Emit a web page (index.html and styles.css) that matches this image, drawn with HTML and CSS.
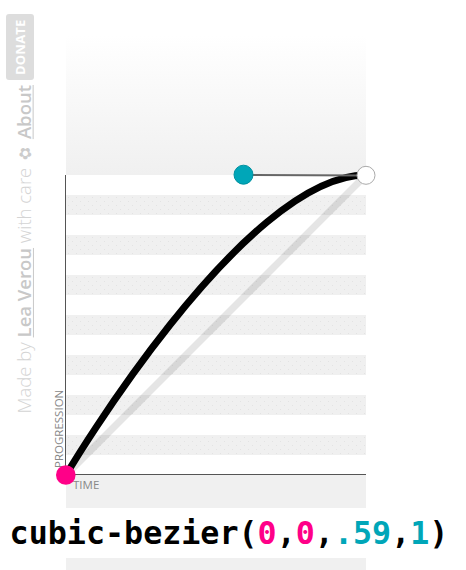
FILE: index.html
```html
<!DOCTYPE html>
<html lang="en">
<head>
<meta charset="utf-8">
<title>cubic-bezier</title>
<link rel="stylesheet" href="styles.css">
</head>
<body>
<div class="app">
  <aside class="side">
    <a class="donate" href="#">DONATE</a>
    <p class="credit">Made by <a class="strong" href="#">Lea Verou</a> with care <span class="flower">✿</span> <a class="strong" href="#">About</a></p>
  </aside>
  <svg class="plot" width="330" height="508" viewBox="46 0 330 508" xmlns="http://www.w3.org/2000/svg">
    <defs>
      <linearGradient id="fade" x1="0" y1="0" x2="0" y2="1">
        <stop offset="0" stop-color="#ffffff"/>
        <stop offset="1" stop-color="#f0f0f0"/>
      </linearGradient>
      <pattern id="dots" width="8" height="8" patternUnits="userSpaceOnUse" x="66" y="195">
        <rect x="2" y="2" width="1" height="1" fill="#e3e3e3"/>
        <rect x="6" y="6" width="1" height="1" fill="#e3e3e3"/>
      </pattern>
    </defs>
    <rect x="66" y="35" width="300" height="140" fill="url(#fade)"/>
    <g class="bands">
      <rect x="66" y="195" width="300" height="20"/>
      <rect x="66" y="235" width="300" height="20"/>
      <rect x="66" y="275" width="300" height="20"/>
      <rect x="66" y="315" width="300" height="20"/>
      <rect x="66" y="355" width="300" height="20"/>
      <rect x="66" y="395" width="300" height="20"/>
      <rect x="66" y="435" width="300" height="20"/>
    </g>
    <g fill="url(#dots)">
      <rect x="66" y="195" width="300" height="20"/>
      <rect x="66" y="235" width="300" height="20"/>
      <rect x="66" y="275" width="300" height="20"/>
      <rect x="66" y="315" width="300" height="20"/>
      <rect x="66" y="355" width="300" height="20"/>
      <rect x="66" y="395" width="300" height="20"/>
      <rect x="66" y="435" width="300" height="20"/>
    </g>
    <rect x="66" y="475" width="300" height="33" fill="#f0f0f0"/>
    <line x1="65.5" y1="175" x2="65.5" y2="475" stroke="#555" stroke-width="1"/>
    <line x1="66" y1="474.5" x2="366" y2="474.5" stroke="#555" stroke-width="1"/>
    <text class="axis-label" transform="rotate(-90)" x="-468" y="62.5">PROGRESSION</text>
    <text class="axis-label" x="73" y="489">TIME</text>
    <line x1="66" y1="475" x2="366" y2="175" stroke="rgba(0,0,0,0.1)" stroke-width="7"/>
    <path d="M66,475 C66,475 243,175 366,175" fill="none" stroke="#000" stroke-width="7"/>
    <line x1="243" y1="175" x2="366" y2="175.5" stroke="#666" stroke-width="2"/>
    <circle cx="243.5" cy="174.7" r="9.5" fill="#00a6b8" stroke="#0091a0" stroke-width="1"/>
    <circle cx="366" cy="175.3" r="9" fill="#fff" stroke="#aaa" stroke-width="1"/>
    <circle cx="65.8" cy="475" r="9.8" fill="#ff0088"/>
  </svg>
</div>
<div class="output"><span class="fn">cubic-bezier(</span><span class="p1">0</span>,<span class="p1">0</span>,<span class="p2">.59</span>,<span class="p2">1</span>)</div>
<div class="tail"></div>
</body>
</html>
```
FILE: styles.css
```css
html, body {
  margin: 0;
  padding: 0;
  background: #fff;
}
body {
  width: 466px;
  height: 570px;
  overflow: hidden;
  font-family: "Open Sans", "Noto Sans", sans-serif;
}
.app {
  display: flex;
  height: 508px;
}
.side {
  width: 46px;
  flex: none;
  display: flex;
  flex-direction: column;
  align-items: flex-start;
  padding-top: 14px;
  box-sizing: border-box;
}
.donate {
  margin-left: 6px;
  width: 28px;
  height: 66px;
  border-radius: 3px;
  background: #dddddd;
  color: #fff;
  font-weight: 700;
  font-size: 13px;
  text-decoration: none;
  writing-mode: vertical-rl;
  transform: rotate(180deg);
  display: flex;
  align-items: center;
  justify-content: center;
  letter-spacing: 0.2px;
}
.credit {
  margin: 5px 0 0 12px;
  writing-mode: vertical-rl;
  transform: rotate(180deg);
  font-size: 18.5px;
  font-weight: 300;
  color: #d4d4d4;
  line-height: 24px;
  white-space: nowrap;
}
.credit .strong {
  font-weight: 600;
  color: #c8c8c8;
  text-decoration: underline;
}
.flower {
  font-size: 16px;
  color: #cccccc;
}
.plot {
  display: block;
  flex: none;
}
.bands rect {
  fill: #f0f0f0;
}
.axis-label {
  font-family: "Open Sans", "Noto Sans", sans-serif;
  font-size: 11.5px;
  fill: #888;
}
.output {
  height: 50px;
  line-height: 50px;
  text-align: center;
  padding-right: 8px;
  font-family: "DejaVu Sans Mono", "Liberation Mono", monospace;
  font-weight: 700;
  font-size: 31.7px;
  color: #000;
  white-space: nowrap;
}
.p1 { color: #ff0088; }
.p2 { color: #00a6b8; }
.tail {
  margin-left: 66px;
  width: 300px;
  height: 12px;
  background: #f0f0f0;
}
```
